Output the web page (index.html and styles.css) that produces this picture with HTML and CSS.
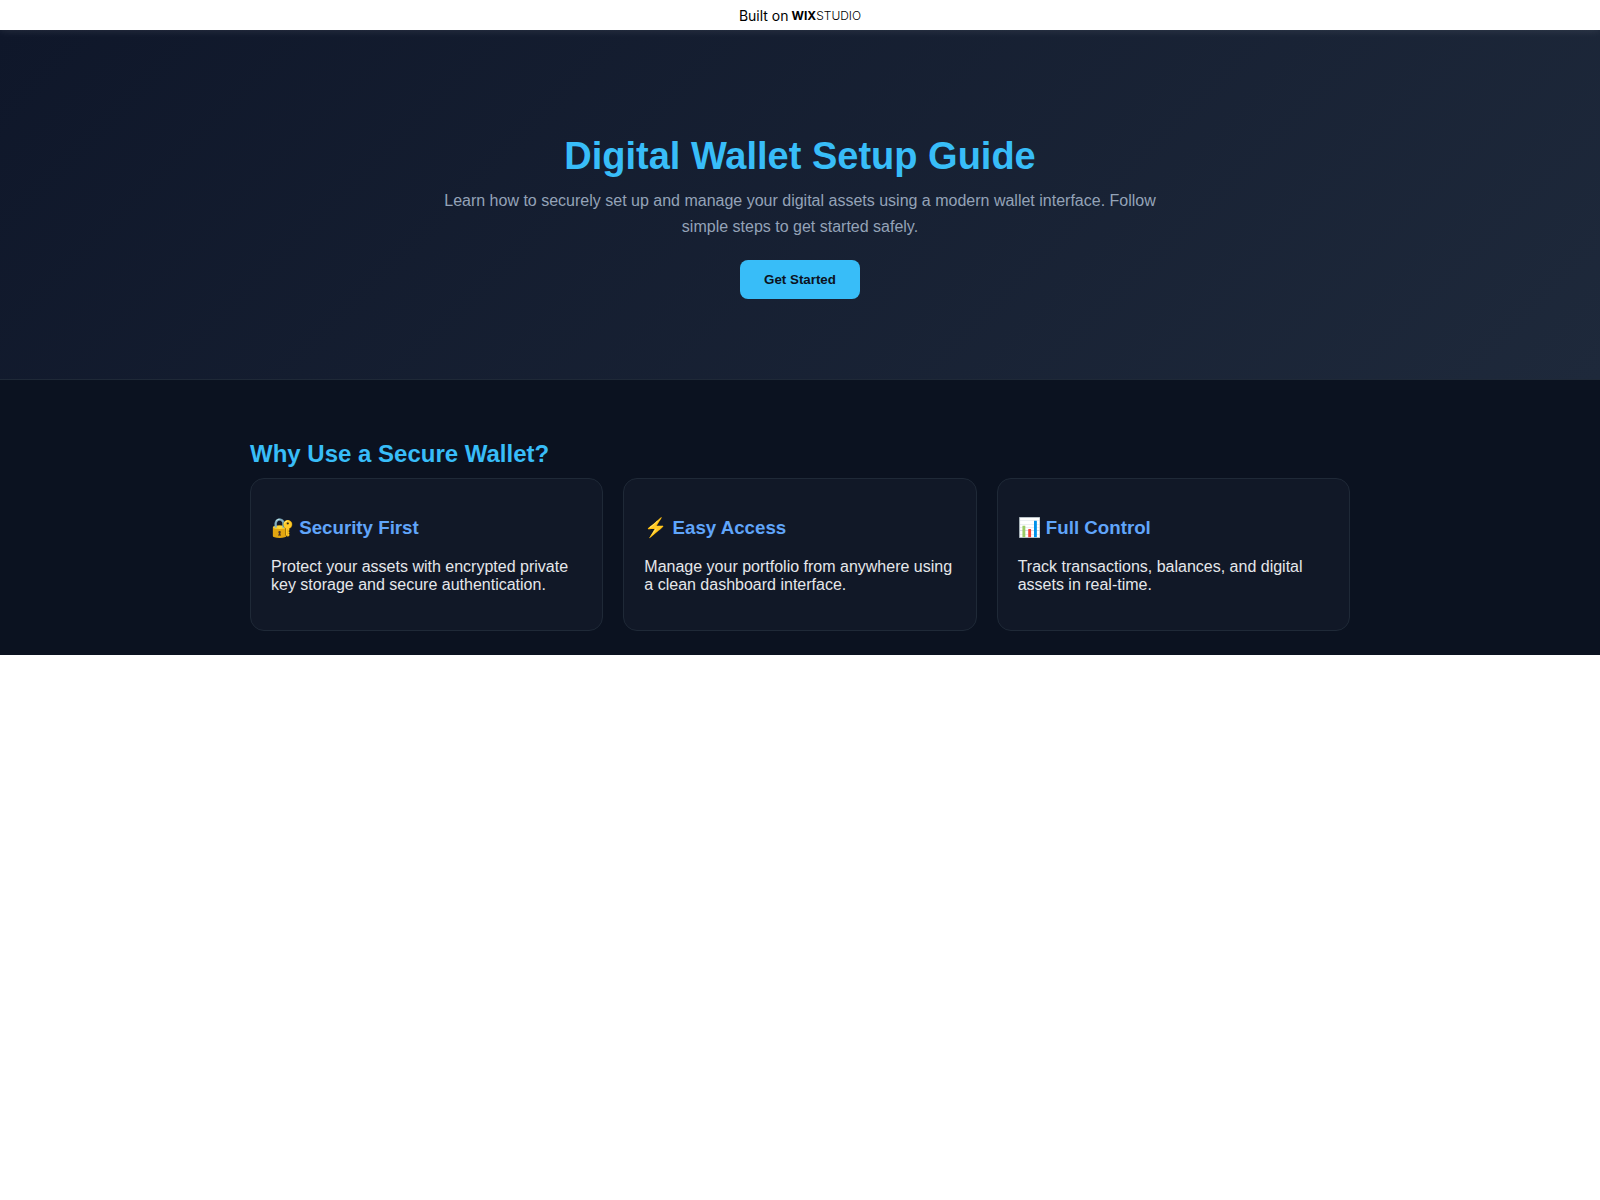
FILE: index.html
```html
<!DOCTYPE html>
<html lang="en">
<head>
    <meta charset="UTF-8">
    <meta name="viewport" content="width=device-width, initial-scale=1.0">
    <title>Digital Wallet Setup Guide</title>
    <link rel="stylesheet" href="styles.css">
</head>
<body>
    <a class="banner" href="#">
        <span class="built">Built on</span>
        <span class="wix">WIX</span>
        <span class="studio">STUDIO</span>
    </a>
    <div class="page">
        <header class="hero">
            <h1>Digital Wallet Setup Guide</h1>
            <p>Learn how to securely set up and manage your digital assets using a modern wallet interface. Follow simple steps to get started safely.</p>
            <button class="btn">Get Started</button>
        </header>
        <section class="section">
            <h2>Why Use a Secure Wallet?</h2>
            <div class="cards">
                <div class="card">
                    <h3>🔐 Security First</h3>
                    <p>Protect your assets with encrypted private key storage and secure authentication.</p>
                </div>
                <div class="card">
                    <h3>⚡ Easy Access</h3>
                    <p>Manage your portfolio from anywhere using a clean dashboard interface.</p>
                </div>
                <div class="card">
                    <h3>📊 Full Control</h3>
                    <p>Track transactions, balances, and digital assets in real-time.</p>
                </div>
            </div>
        </section>
    </div>
</body>
</html>
```
FILE: styles.css
```css
body {
    margin: 0;
    background: #fff;
    font-family: "Liberation Sans", Arial, sans-serif;
}
.banner {
    position: relative;
    display: flex;
    justify-content: center;
    align-items: center;
    height: 30px;
    background: #fff;
    color: #000;
    font-family: Inter, sans-serif;
    font-size: 12px;
    text-decoration: none;
    box-shadow: 0 0 10px rgba(255, 255, 255, 0.12);
}
.built {
    margin-right: 3px;
    font-size: 14px;
}
.wix {
    font-weight: 700;
}
.studio {
    font-weight: 300;
}
.page {
    background: #0b1220;
    color: #e5e7eb;
}
.hero {
    padding: 80px 20px;
    text-align: center;
    background: linear-gradient(135deg, #0f172a, #1e293b);
    border-bottom: 1px solid #1f2937;
}
.hero h1 {
    margin: 25px 0 10px;
    font-size: 38px;
    color: #38bdf8;
}
.hero p {
    max-width: 720px;
    margin: 0 auto 20px;
    line-height: 26px;
    color: #94a3b8;
}
.btn {
    padding: 12px 24px;
    border: none;
    border-radius: 8px;
    background: #38bdf8;
    color: #0b1220;
    font-family: inherit;
    font-weight: bold;
    cursor: pointer;
}
.section {
    max-width: 1100px;
    margin: auto;
    padding: 60px 20px 24px;
}
.section h2 {
    margin: 0 0 10px;
    font-size: 24px;
    color: #38bdf8;
}
.cards {
    display: grid;
    grid-template-columns: repeat(auto-fit, minmax(250px, 1fr));
    gap: 20px;
}
.card {
    padding: 20px;
    border: 1px solid #1f2937;
    border-radius: 14px;
    background: #111827;
}
.card h3 {
    margin: 18px 0 19px;
    color: #60a5fa;
}
```
